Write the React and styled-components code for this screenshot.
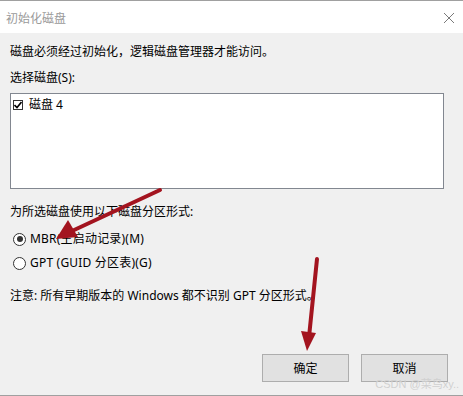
import React from "react";
import styled, { createGlobalStyle } from "styled-components";

const GlobalStyle = createGlobalStyle`
  html, body {
    margin: 0;
    padding: 0;
    background: #f0f0f0;
  }
  body {
    font-family: "Noto Sans", "Noto Sans CJK SC", sans-serif;
    font-size: 12px;
    color: #000;
  }
`;

function App() {
  return (
    <Window>
      <GlobalStyle />
      <TitleBar>
        <Title>初始化磁盘</Title>
        <CloseButton>
          <svg width="12" height="12" viewBox="0 0 12 12">
            <path d="M1 1 L11 11 M11 1 L1 11" stroke="#7a7a7a" strokeWidth="1" />
          </svg>
        </CloseButton>
      </TitleBar>
      <Body>
        <Line $top={11}>磁盘必须经过初始化，逻辑磁盘管理器才能访问。</Line>
        <Line $top={10}>选择磁盘(S):</Line>
        <ListBox>
          <ListItem>
            <CheckBox>
              <svg width="8" height="8" viewBox="0 0 8 8">
                <path d="M0.5 4 L3 6.5 L7.5 1" stroke="#000" strokeWidth="1.6" fill="none" />
              </svg>
            </CheckBox>
            磁盘 4
          </ListItem>
        </ListBox>
        <Line $top={15}>为所选磁盘使用以下磁盘分区形式:</Line>
        <RadioRow $top={11}>
          <Radio $checked />
          MBR(主启动记录)(M)
        </RadioRow>
        <RadioRow $top={8}>
          <Radio />
          GPT (GUID 分区表)(G)
        </RadioRow>
        <Line $top={17}>注意: 所有早期版本的 Windows 都不识别 GPT 分区形式。</Line>
        <ButtonRow>
          <Button>确定</Button>
          <Button>取消</Button>
        </ButtonRow>
        <Watermark>CSDN @菜鸟xy..</Watermark>
      </Body>
      <Arrows width="463" height="396" viewBox="0 0 463 396">
        <line x1="160" y1="189" x2="72" y2="230" stroke="#a3141f" strokeWidth="4" strokeLinecap="round" />
        <polygon points="56,238 68,219 78,236" fill="#a3141f" />
        <line x1="317" y1="258" x2="309" y2="336" stroke="#a3141f" strokeWidth="4" strokeLinecap="round" />
        <polygon points="307,350 301,330 316,332" fill="#a3141f" />
      </Arrows>
    </Window>
  );
}

const Window = styled.div`
  position: relative;
  display: flex;
  flex-direction: column;
  width: 463px;
  height: 396px;
  box-sizing: border-box;
  border-top: 1px solid #a0a0a0;
  border-bottom: 1px solid #a0a0a0;
  background: #f0f0f0;
  overflow: hidden;
`;

const TitleBar = styled.div`
  display: flex;
  align-items: center;
  justify-content: space-between;
  height: 32px;
  padding: 0 8px 0 6px;
  background: #ffffff;
`;

const Title = styled.div`
  color: #9a9a9a;
  font-size: 12px;
  margin-top: 2px;
`;

const CloseButton = styled.div`
  display: flex;
  align-items: center;
  margin-top: 2px;
`;

const Body = styled.div`
  position: relative;
  flex: 1;
  display: flex;
  flex-direction: column;
  padding: 0 10px;
`;

const Line = styled.div`
  margin-top: ${(p) => p.$top}px;
  line-height: 16px;
  white-space: nowrap;
`;

const ListBox = styled.div`
  margin-top: 7px;
  width: 434px;
  height: 96px;
  box-sizing: border-box;
  border: 1px solid #828790;
  background: #ffffff;
  padding: 3px 2px;
`;

const ListItem = styled.div`
  display: flex;
  align-items: center;
  gap: 6px;
  line-height: 16px;
  font-size: 12px;
`;

const CheckBox = styled.span`
  display: flex;
  align-items: center;
  justify-content: center;
  width: 10px;
  height: 10px;
  box-sizing: border-box;
  border: 1px solid #333;
  background: #fff;
`;

const RadioRow = styled.div`
  display: flex;
  align-items: center;
  gap: 4px;
  margin-top: ${(p) => p.$top}px;
  padding-left: 3px;
  line-height: 16px;
  letter-spacing: 0.2px;
`;

const Radio = styled.span`
  position: relative;
  width: 13px;
  height: 13px;
  box-sizing: border-box;
  border-radius: 50%;
  border: 1px solid #333;
  background: #fff;
  &::after {
    content: "";
    display: ${(p) => (p.$checked ? "block" : "none")};
    position: absolute;
    left: 2.5px;
    top: 2.5px;
    width: 6px;
    height: 6px;
    border-radius: 50%;
    background: #333;
  }
`;

const ButtonRow = styled.div`
  display: flex;
  justify-content: flex-end;
  gap: 12px;
  margin-top: 50px;
  padding-right: 5px;
`;

const Button = styled.div`
  width: 87px;
  height: 28px;
  box-sizing: border-box;
  display: flex;
  align-items: center;
  justify-content: center;
  border: 1px solid #adadad;
  background: #e1e1e1;
  font-size: 12px;
`;

const Watermark = styled.div`
  position: absolute;
  right: 4px;
  bottom: 4px;
  font-family: "Liberation Sans", "Noto Sans CJK SC", sans-serif;
  font-size: 11px;
  color: #d0d0d0;
`;

const Arrows = styled.svg`
  position: absolute;
  left: 0;
  top: 0;
  pointer-events: none;
`;

export default App;
